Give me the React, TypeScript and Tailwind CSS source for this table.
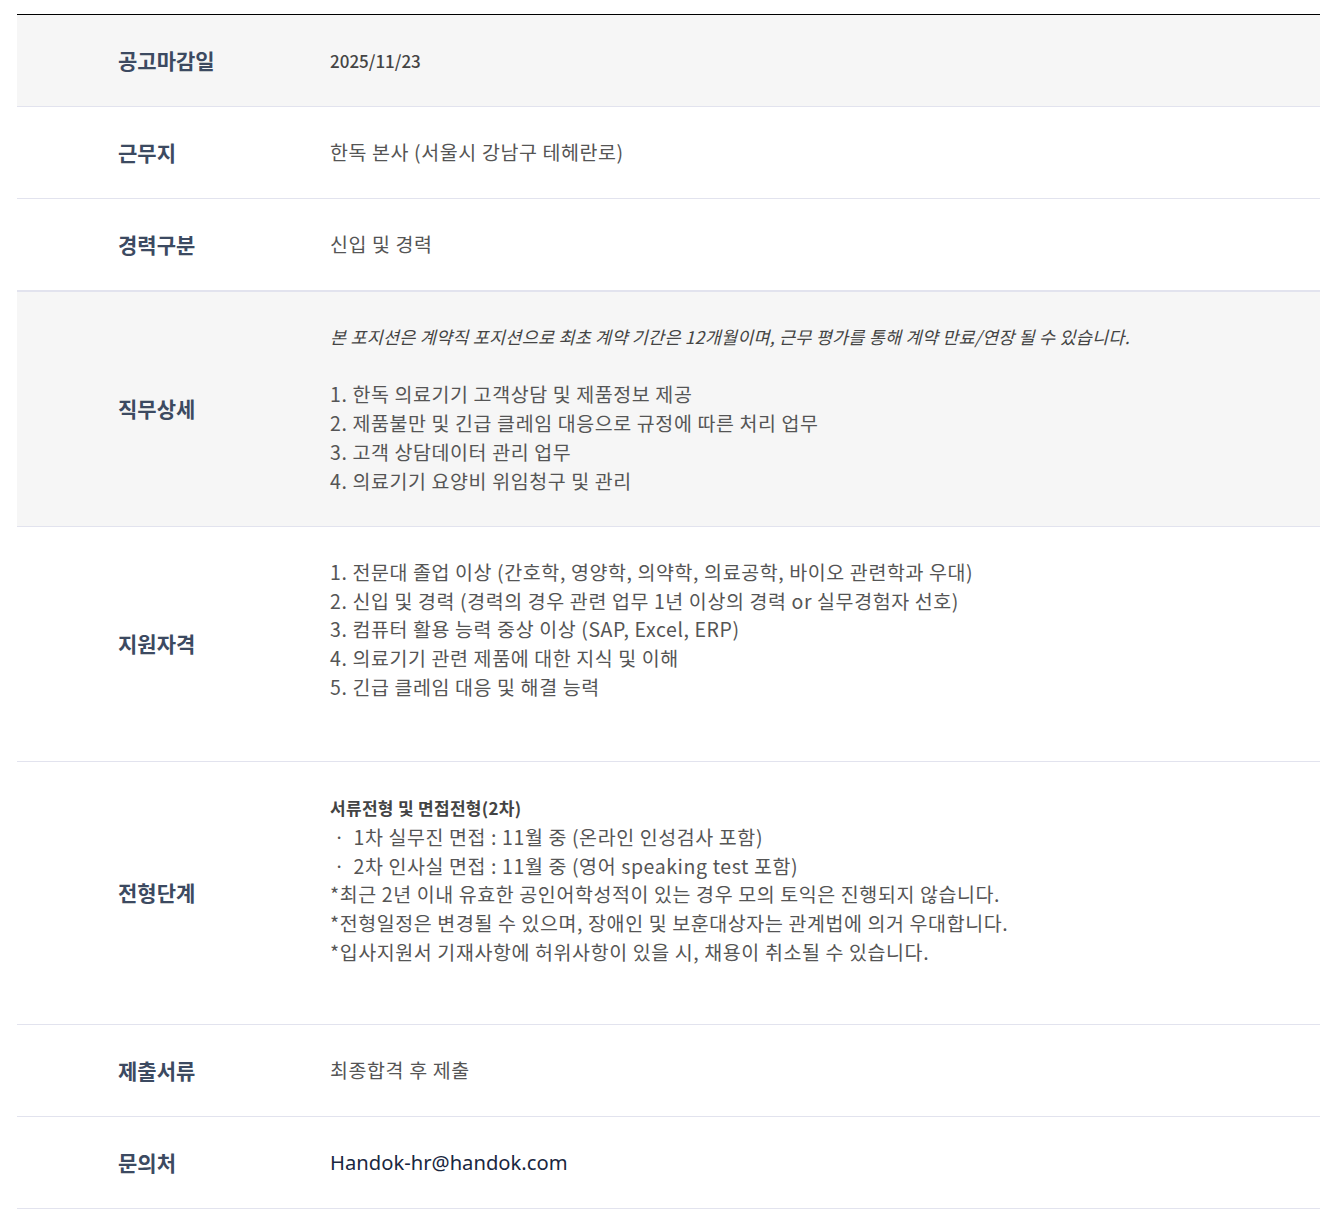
import React from 'react';

const font = { fontFamily: '"Noto Sans CJK KR", "Noto Sans", sans-serif' };

type RowProps = {
  label: string;
  gray?: boolean;
  className?: string;
  children: React.ReactNode;
};

function Row({ label, gray, className, children }: RowProps) {
  return (
    <div
      className={
        'flex items-center border-b border-[#e2e3ee] ' +
        (gray ? 'bg-[#f6f6f6] ' : 'bg-white ') +
        (className ?? '')
      }
    >
      <div className="w-[313px] shrink-0 pl-[101px] text-[21px] font-bold text-[#3c4a61]">
        {label}
      </div>
      <div className="flex-1 text-[19.5px] leading-[28.7px] tracking-[0.6px] text-[#555]">{children}</div>
    </div>
  );
}

export default function App() {
  return (
    <div className="min-h-[1226px] bg-white pt-[14px]" style={font}>
      <div className="ml-[17px] border-t border-black">
        <Row label="공고마감일" gray className="h-[92px]">
          <span className="text-[17px] font-medium tracking-normal text-[#444]">2025/11/23</span>
        </Row>
        <Row label="근무지" className="h-[92px]">
          한독 본사 (서울시 강남구 테헤란로)
        </Row>
        <Row label="경력구분" className="h-[93px] border-b-2">
          신입 및 경력
        </Row>
        <Row label="직무상세" gray className="py-[31px]">
          <p className="text-[17.5px] italic tracking-[0.2px] text-[#444]">
            본 포지션은 계약직 포지션으로 최초 계약 기간은 12개월이며, 근무 평가를 통해 계약 만료/연장 될 수 있습니다.
          </p>
          <p>&nbsp;</p>
          <p>1. 한독 의료기기 고객상담 및 제품정보 제공</p>
          <p>2. 제품불만 및 긴급 클레임 대응으로 규정에 따른 처리 업무</p>
          <p>3. 고객 상담데이터 관리 업무</p>
          <p>4. 의료기기 요양비 위임청구 및 관리</p>
        </Row>
        <Row label="지원자격" className="h-[235px]">
          <div className="pt-[31px] pb-[60px]">
            <p>1. 전문대 졸업 이상 (간호학, 영양학, 의약학, 의료공학, 바이오 관련학과 우대)</p>
            <p>2. 신입 및 경력 (경력의 경우 관련 업무 1년 이상의 경력 or 실무경험자 선호)</p>
            <p>3. 컴퓨터 활용 능력 중상 이상 (SAP, Excel, ERP)</p>
            <p>4. 의료기기 관련 제품에 대한 지식 및 이해</p>
            <p>5. 긴급 클레임 대응 및 해결 능력</p>
          </div>
        </Row>
        <Row label="전형단계" className="h-[263px]">
          <div className="pt-[32px] pb-[58px]">
            <p className="text-[17px] font-bold tracking-[0.3px] text-[#444]">서류전형 및 면접전형(2차)</p>
            <p>ㆍ 1차 실무진 면접 : 11월 중 (온라인 인성검사 포함)</p>
            <p>ㆍ 2차 인사실 면접 : 11월 중 (영어 speaking test 포함)</p>
            <p>*최근 2년 이내 유효한 공인어학성적이 있는 경우 모의 토익은 진행되지 않습니다.</p>
            <p>*전형일정은 변경될 수 있으며, 장애인 및 보훈대상자는 관계법에 의거 우대합니다.</p>
            <p>*입사지원서 기재사항에 허위사항이 있을 시, 채용이 취소될 수 있습니다.</p>
          </div>
        </Row>
        <Row label="제출서류" className="h-[92px]">
          최종합격 후 제출
        </Row>
        <Row label="문의처" className="h-[92px]">
          <span
            className="text-[20.2px] tracking-normal text-[#1a2740]"
            style={{ fontFamily: '"Noto Sans", sans-serif' }}
          >
            Handok-hr@handok.com
          </span>
        </Row>
      </div>
    </div>
  );
}
